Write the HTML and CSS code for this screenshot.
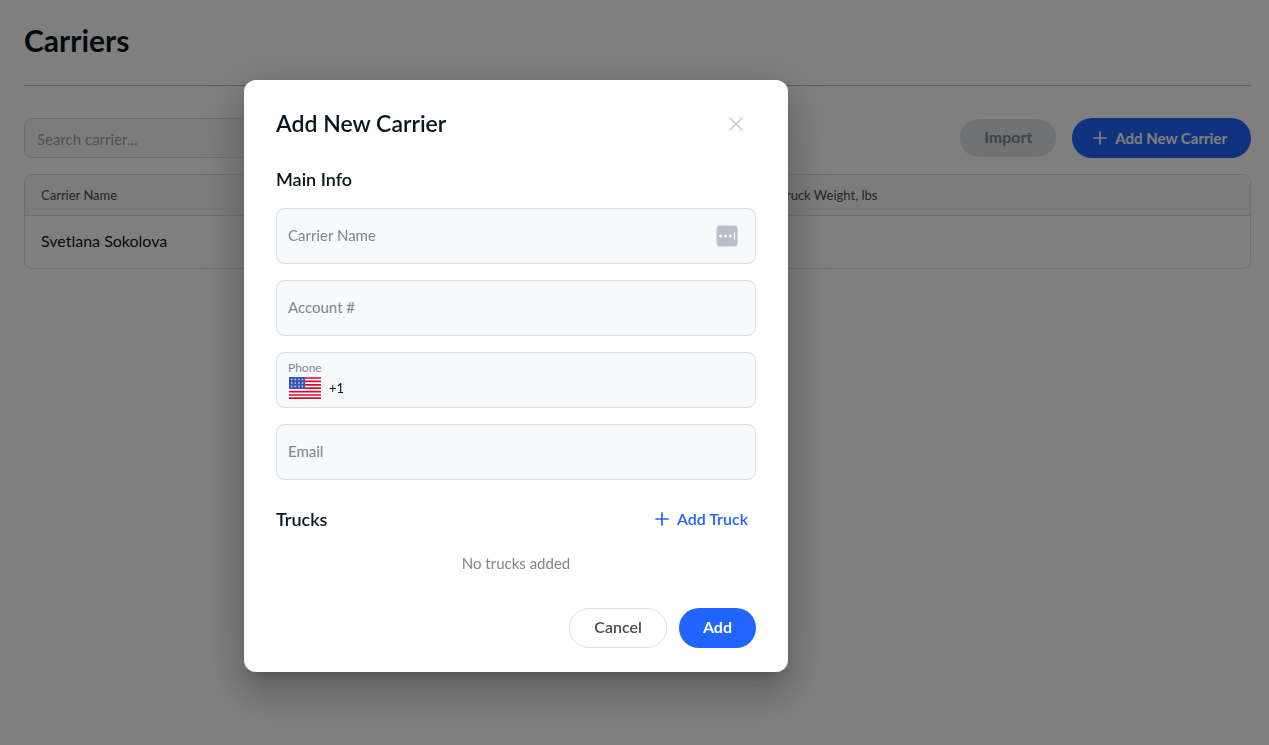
FILE: index.html
```html
<!DOCTYPE html>
<html lang="en">
<head>
    <meta charset="UTF-8">
    <meta name="viewport" content="width=device-width, initial-scale=1.0">
    <title>Carriers</title>
    <link rel="stylesheet" href="styles.css">
</head>
<body>
    <main class="page">
        <h1>Carriers</h1>

        <div class="toolbar">
            <input class="search" type="search" placeholder="Search carrier..." aria-label="Search carrier">
            <div class="toolbar-actions">
                <button class="btn btn-import" type="button" disabled>Import</button>
                <button class="btn btn-primary btn-new" type="button">
                    <svg class="plus" viewBox="0 0 14 14"><path d="M7 1v12M1 7h12"/></svg>
                    Add New Carrier
                </button>
            </div>
        </div>

        <div class="table-wrap">
            <table>
                <thead>
                    <tr>
                        <th class="col-name">Carrier Name</th>
                        <th>Truck Weight, lbs</th>
                    </tr>
                </thead>
                <tbody>
                    <tr>
                        <td>Svetlana Sokolova</td>
                        <td></td>
                    </tr>
                </tbody>
            </table>
        </div>
    </main>

    <div class="overlay">
        <form class="modal" role="dialog" aria-modal="true" aria-labelledby="modal-title">
            <header class="modal-header">
                <h2 id="modal-title">Add New Carrier</h2>
                <button class="close" type="button" aria-label="Close">
                    <svg viewBox="0 0 14 14"><path d="M1 1l12 12M13 1L1 13"/></svg>
                </button>
            </header>

            <h3>Main Info</h3>
            <div class="fields">
                <label class="field">
                    <span>Carrier Name</span>
                    <input type="text" name="name">
                    <svg class="autofill" viewBox="0 0 22 22">
                        <rect x="0.5" y="0.5" width="21" height="21" rx="3" fill="#b8bfca" stroke="#d5dae1"/>
                        <g fill="#fff">
                            <circle cx="4.500" cy="11" r="1.500"/>
                            <circle cx="9.500" cy="11" r="1.500"/>
                            <circle cx="14.500" cy="11" r="1.500"/>
                            <rect x="18" y="7" width="1" height="8"/>
                        </g>
                    </svg>
                </label>
                <label class="field">
                    <span>Account #</span>
                    <input type="text" name="account">
                </label>
                <div class="field field-phone">
                    <label for="phone">Phone</label>
                    <div class="phone-row">
                        <svg class="flag" viewBox="0 0 32 22">
                            <rect width="32" height="22" fill="#fff"/>
                            <path d="M0 1h32M0 4.400h32M0 7.800h32M0 11.200h32M0 14.600h32M0 18h32M0 21.200h32" stroke="#dd0b34" stroke-width="1.700"/>
                            <rect width="16" height="12" fill="#3a55b4"/>
                            <path d="M2 2.500h13M2 6h13M2 9.500h13" stroke="#c5cdeb" stroke-width="1.500" stroke-dasharray="1.500 2.100"/>
                        </svg>
                        <input type="tel" id="phone" name="phone" value="+1">
                    </div>
                </div>
                <label class="field">
                    <span>Email</span>
                    <input type="email" name="email">
                </label>
            </div>

            <div class="trucks-header">
                <h3>Trucks</h3>
                <button class="add-truck" type="button">
                    <svg class="plus" viewBox="0 0 14 14"><path d="M7 1v12M1 7h12"/></svg>
                    Add Truck
                </button>
            </div>
            <p class="empty">No trucks added</p>

            <footer class="modal-footer">
                <button class="btn btn-outline" type="button">Cancel</button>
                <button class="btn btn-primary" type="submit">Add</button>
            </footer>
        </form>
    </div>
</body>
</html>
```
FILE: styles.css
```css
* {
    margin: 0;
    padding: 0;
    box-sizing: border-box;
}

body {
    min-height: 100vh;
    background: #fff;
    color: #09161d;
    font-family: Lato, "Open Sans", sans-serif;
    font-size: 16px;
    line-height: 24px;
}

input,
button {
    font: inherit;
    color: inherit;
}

button {
    border: none;
    background: none;
    cursor: pointer;
}

h1,
h2,
h3 {
    font-weight: 600;
}

.page {
    padding: 20px 18px 0 24px;
}

h1 {
    padding-bottom: 25px;
    border-bottom: 1px solid #b8bcbf;
    margin-bottom: 32px;
    font-size: 30px;
    font-weight: 700;
    line-height: 40px;
}

/* toolbar */
.toolbar {
    display: flex;
    justify-content: space-between;
    align-items: center;
    margin-bottom: 16px;
}

.search {
    width: 320px;
    height: 40px;
    padding: 2px 12px 0;
    border: 1px solid #dadfe3;
    border-radius: 8px;
    background: #f8f9fb;
    font-size: 15px;
}

.search::placeholder {
    color: #9da3a8;
}

.toolbar-actions {
    display: flex;
    align-items: center;
    gap: 16px;
}

.btn {
    display: flex;
    align-items: center;
    justify-content: center;
    gap: 8px;
    height: 40px;
    padding: 0 24px 2px;
    border-radius: 20px;
    font-weight: 600;
}

.btn-primary {
    background: #2264ff;
    color: #fff;
    font-weight: 700;
}

.btn-import {
    width: 96px;
    height: 38px;
    background: #dfe2e6;
    color: #7d868c;
    font-weight: 700;
}

.btn-new {
    padding: 0 24px 0 21px;
    font-size: 15px;
}

.plus {
    width: 14px;
    height: 14px;
    fill: none;
    stroke: currentColor;
    stroke-width: 1.700;
    stroke-linecap: round;
}

/* table */
.table-wrap {
    border: 1px solid #dadfe3;
    border-radius: 8px;
    overflow: hidden;
}

table {
    width: 100%;
    table-layout: fixed;
    border-collapse: collapse;
}

th,
td {
    padding: 0 16px;
    text-align: left;
}

th {
    height: 40px;
    border-bottom: 1px solid #dadfe3;
    background: #f8f9fb;
    color: #454d53;
    font-size: 13px;
    font-weight: 400;
}

td {
    height: 53px;
    padding-bottom: 2px;
}

.col-name {
    width: 60.3%;
}

/* modal */
.overlay {
    position: fixed;
    inset: 0;
    display: flex;
    align-items: center;
    justify-content: center;
    padding: 7px 237px 0 0;
    background: rgba(0, 0, 0, 0.5);
}

.modal {
    width: 544px;
    padding: 24px 32px;
    border-radius: 12px;
    background: #fff;
    box-shadow: 0 11px 15px -7px rgba(0, 0, 0, 0.2),
                0 24px 38px 3px rgba(0, 0, 0, 0.14),
                0 9px 46px 8px rgba(0, 0, 0, 0.12);
}

.modal-header {
    display: flex;
    align-items: center;
    justify-content: space-between;
    margin-bottom: 24px;
}

h2 {
    padding-bottom: 2px;
    font-size: 23px;
    line-height: 38px;
}

h3 {
    padding-bottom: 2px;
    font-size: 18px;
    line-height: 22px;
}

.close {
    display: flex;
    align-items: center;
    justify-content: center;
    width: 40px;
    height: 40px;
    color: #cbcecf;
}

.close svg {
    width: 14px;
    height: 14px;
    fill: none;
    stroke: currentColor;
    stroke-width: 1.700;
    stroke-linecap: round;
}

.fields {
    display: flex;
    flex-direction: column;
    gap: 16px;
    margin: 16px 0 24px;
}

.field {
    display: flex;
    align-items: center;
    gap: 8px;
    height: 56px;
    padding: 0 17px 0 11px;
    border: 1px solid #dadfe3;
    border-radius: 8px;
    background: #f8f9fb;
    color: #7d868c;
    font-size: 15px;
}

.field span {
    padding-bottom: 2px;
}

.field input {
    flex: 1;
    min-width: 0;
    border: none;
    outline: none;
    background: transparent;
    color: #09161d;
}

.autofill {
    width: 22px;
    height: 22px;
}

.field-phone {
    flex-direction: column;
    align-items: stretch;
    gap: 0;
    padding-top: 7px;
}

.field-phone label {
    font-size: 12px;
    line-height: 16px;
}

.phone-row {
    display: flex;
    align-items: center;
    gap: 8px;
    padding-left: 1px;
}

.phone-row input {
    height: 24px;
    font-size: 13px;
}

.flag {
    width: 32px;
    height: 22px;
}

.trucks-header {
    display: flex;
    align-items: center;
    justify-content: space-between;
    height: 32px;
    margin-bottom: 15px;
}

.add-truck {
    display: flex;
    align-items: center;
    gap: 8px;
    padding: 3px 8px 5px;
    color: #2264ff;
    font-weight: 600;
}

.empty {
    margin-bottom: 33px;
    color: #7d868c;
    font-size: 15px;
    text-align: center;
}

.modal-footer {
    display: flex;
    justify-content: flex-end;
    gap: 12px;
}

.btn-outline {
    border: 1px solid #dde1e4;
    color: #454d53;
}
```
